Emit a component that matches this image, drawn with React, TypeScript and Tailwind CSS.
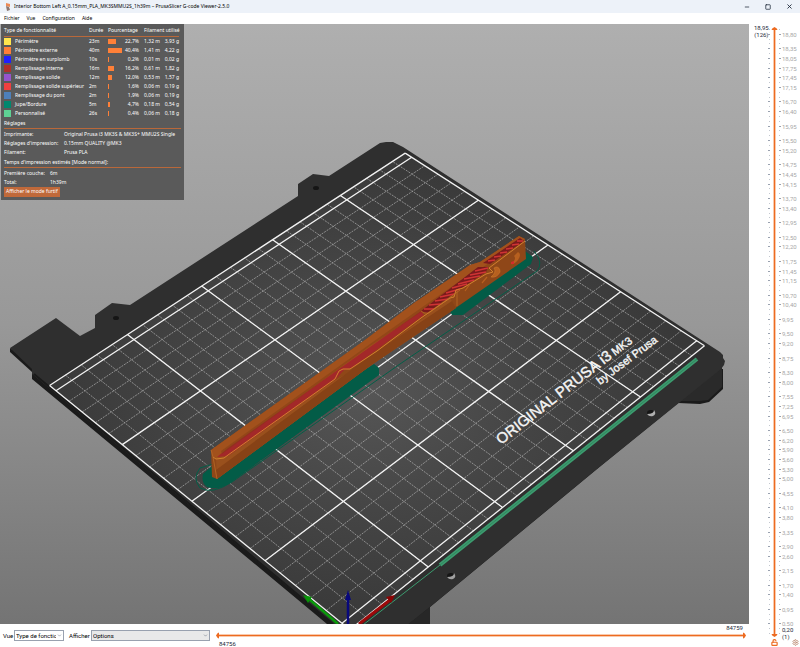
import { useState } from 'react';
import { ChevronDown, LockOpen, Minus, Settings, Square, X } from 'lucide-react';

type Point = [number, number];

const features = [
  { name: 'Périmètre', color: '#ffe64d', time: '23m', percent: 22.7, length: '1,32 m', weight: '3,93 g' },
  { name: 'Périmètre externe', color: '#ff7d38', time: '40m', percent: 40.4, length: '1,41 m', weight: '4,22 g' },
  { name: 'Périmètre en surplomb', color: '#1f1fff', time: '10s', percent: 0.2, length: '0,01 m', weight: '0,02 g' },
  { name: 'Remplissage interne', color: '#b03029', time: '16m', percent: 16.2, length: '0,61 m', weight: '1,82 g' },
  { name: 'Remplissage solide', color: '#9654cc', time: '12m', percent: 12.0, length: '0,53 m', weight: '1,57 g' },
  { name: 'Remplissage solide supérieur', color: '#f04040', time: '2m', percent: 1.6, length: '0,06 m', weight: '0,19 g' },
  { name: 'Remplissage du pont', color: '#4d80ba', time: '2m', percent: 1.9, length: '0,06 m', weight: '0,19 g' },
  { name: 'Jupe/Bordure', color: '#00876e', time: '5m', percent: 4.7, length: '0,18 m', weight: '0,54 g' },
  { name: 'Personnalisé', color: '#5ed194', time: '26s', percent: 0.4, length: '0,06 m', weight: '0,18 g' },
];

const settings = [
  ['Imprimante:', 'Original Prusa i3 MK3S & MK3S+ MMU2S Single'],
  ["Réglages d'impression:", '0.15mm QUALITY @MK3'],
  ['Filament:', 'Prusa PLA'],
];

const LAYER_COUNT = 126;
const labelledHeights = [
  18.8, 18.35, 18.05, 17.75, 17.45, 17.15, 16.7, 16.4, 15.95, 15.5, 15.2, 14.75, 14.45, 14.15, 13.7, 13.4, 12.95,
  12.5, 12.2, 11.75, 11.45, 11.15, 10.7, 10.4, 9.95, 9.5, 9.2, 8.75, 8.3, 8.0, 7.55, 7.25, 6.95, 6.5, 6.2, 5.9, 5.6,
  5.3, 5.0, 4.55, 4.1, 3.8, 3.35, 2.9, 2.6, 2.15, 1.7, 1.4, 0.95, 0.5,
];
const layers = Array.from({ length: LAYER_COUNT }, (_, i) => {
  const z = 18.95 - i * 0.15;
  return { z, top: (i / (LAYER_COUNT - 1)) * 100, labelled: labelledHeights.some((h) => Math.abs(h - z) < 0.01) };
});

// Bed millimetres (250 x 200) to view coordinates
const corners: Point[] = [
  [342, 623.3],
  [696.7, 340.7],
  [411.7, 157.3],
  [56, 390.7],
];

const project = (x: number, y: number): Point => {
  const [[x0, y0], [x1, y1], [x2, y2], [x3, y3]] = corners;
  const sx = x0 - x1 + x2 - x3;
  const sy = y0 - y1 + y2 - y3;
  const det = (x1 - x2) * (y3 - y2) - (y1 - y2) * (x3 - x2);
  const g = (sx * (y3 - y2) - sy * (x3 - x2)) / det;
  const h = ((x1 - x2) * sy - (y1 - y2) * sx) / det;
  const u = x / 250;
  const v = y / 200;
  const w = 1 + g * u + h * v;
  return [
    (x0 + (x1 - x0 + g * x1) * u + (x3 - x0 + h * x3) * v) / w,
    (y0 + (y1 - y0 + g * y1) * u + (y3 - y0 + h * y3) * v) / w,
  ];
};

const line = (x1: number, y1: number, x2: number, y2: number) => {
  const [a, b] = project(x1, y1);
  const [c, d] = project(x2, y2);
  return `M${a} ${b}L${c} ${d}`;
};

const range = (from: number, to: number, step: number) =>
  Array.from({ length: Math.floor((to - from) / step) + 1 }, (_, i) => from + i * step);

const fineGrid = [
  ...range(10, 240, 10).map((x) => line(x, -5, x, 205)),
  ...range(10, 190, 10).map((y) => line(0, y, 250, y)),
].join('');

const boldGrid = [
  ...range(0, 250, 50).map((x) => line(x, -5, x, 205)),
  ...[-5, 0, 50, 100, 150, 200, 205].map((y) => line(0, y, 250, y)),
].join('');

const Bed = () => (
  <g>
    {/* Underside */}
    <path
      d="M10 348V352L32 372V379L327 624H430V607L597 469L678 403L700 404L709 402L723 389V369L600 380L300 560Z"
      fill="#1b1b1b"
    />
    <path d="M660 401L722 366V387L708 400L700 401Z" fill="#2a2a2a" />
    {/* Steel sheet */}
    <path
      d="M10 348L56 318L80 336L95 328V315L112 303L130 305L298 196V184L313 174L329 176L380 143L386 142H393L403 147L720 352L723 355V358L725 361L724 365L721 369L597 469L430 607L409 624H332L32 374V369Z"
      fill="#2f2f2f"
    />
    <path d="M388 640L430 607V640Z" fill="#272727" />
    <path d="M34 374L333 624" stroke="#1b1b1b" strokeWidth="2" />
    <polygon
      points={[project(0, -5), project(250, -5), project(250, 205), project(0, 205)].map((p) => p.join(',')).join(' ')}
      fill="url(#sheet)"
    />
    <path d={fineGrid} stroke="#c4c4c4" strokeWidth="0.8" strokeDasharray="2 1" opacity="0.75" />
    <path d={boldGrid} stroke="#f2f2f2" strokeWidth="1.3" />
    <ellipse cx="316" cy="188" rx="3" ry="2" fill="#151515" />
    <ellipse cx="116" cy="318" rx="3" ry="2" fill="#151515" />
    <ellipse cx="451" cy="576" rx="4" ry="3" fill="#151515" />
    <path d="M447 577Q454 577 454 573Q457 577 453 579Q449 580 447 577Z" fill="#a0a0a0" />
    <ellipse cx="651" cy="413" rx="4" ry="3" fill="#151515" />
    <path d="M647 414Q654 414 654 410Q657 414 653 416Q649 417 647 414Z" fill="#b0b0b0" />
  </g>
);

const BedLabel = () => (
  <g fill="#f5f5f5" stroke="#f5f5f5" strokeWidth="0.4" className="font-['Liberation_Sans',Arial,sans-serif]">
    <g transform="translate(501 445) rotate(-38)">
      <text fontSize="15">ORIGINAL PRUSA i3</text>
    </g>
    <g transform="translate(615 356) rotate(-37)">
      <text fontSize="11">MK3</text>
    </g>
    <g transform="translate(600 385) rotate(-37)">
      <text fontSize="11">by Josef Prusa</text>
    </g>
  </g>
);

const Model = () => (
  <g>
    {/* Skirt and brim */}
    <path
      d="M213 464L200 468Q192 478 200 488Q212 495 232 482L400 364L537 271Q544 263 534 251"
      fill="none"
      stroke="#045f48"
      strokeWidth="1"
    />
    <path d="M212 466L203 474Q201 483 207 487Q218 491 230 483L379 375V368L374 364Z" fill="#035c47" />
    <path d="M450 311L452 315H463L531 264L533 257L525 251L470 290Z" fill="#035c47" />
    {/* Body */}
    <path
      d="M211 450L365 340L414 303L470 265L480 262L519 236L525 239L526 259L457 307L420 328L370 366L217 479L212 477Z"
      fill="#8f4718"
    />
    <path d="M211 450L365 340L414 303L470 265L480 262L519 236L525 239L480 269L370 349L217 459L213 456Z" fill="#a2511c" />
    <path d="M216 459L337 379L352 371L450 298L456 308L370 366L217 479Z" fill="#99501d" />
    <path d="M216 470L370 356L452 301L456 308L370 366L217 479Z" fill="#874216" />
    {/* Infill visible in the cut */}
    <path d="M217 457L228 448L377 342L421 311L424 315L352 368L344 370L337 378L228 456Z" fill="#a32829" />
    <path d="M221 451L377 339L421 308L480 267L486 271L421 312L370 346L222 454Z" fill="#7e3b15" opacity="0.45" />
    <path d="M421 311L478 267L488 267L486 272L460 289L427 313Z" fill="#7a1a1c" />
    <path
      d="M424 309L434 309M429 305L441 304M435 301L448 299M440 297L454 294M446 293L460 289M452 288L467 284M458 284L474 280M464 279L480 276M470 275L486 272M475 271L488 268"
      stroke="#cf3434"
      strokeWidth="1.6"
    />
    <path d="M483 263L520 238L524 241L490 264Z" fill="#7a1a1c" />
    <path
      d="M488 261L495 260M494 257L501 256M500 253L507 252M506 249L513 248M512 245L519 244M517 241L523 241"
      stroke="#cf3434"
      strokeWidth="1.5"
    />
    <path
      d="M213 457L216 459L224 458L228 455L335 379L339 371L343 369L350 369L377 351L421 318L450 298L454 297L456 290L463 288L486 274L493 272L489 268L525 241"
      fill="none"
      stroke="#d3812f"
      strokeWidth="1"
    />
    <path d="M421 311L424 313H429L460 290M457 290V306M211 450L213 457L217 479" fill="none" stroke="#bf7029" strokeWidth="0.7" />
    <path d="M496 267Q500 267 500 272Q497 278 491 277Q497 272 494 268Z" fill="#b7601f" stroke="#d3812f" strokeWidth="0.5" />
    <path d="M518 252Q522 254 518 260Q514 265 511 264Q517 259 514 256Z" fill="#b7601f" />
    <path d="M511 262L514 261V264L511 264Z" fill="#d42c2c" />
    <path d="M465 291L470 284M482 283L487 277" stroke="#b7601f" strokeWidth="1.2" />
  </g>
);

const Axes = () => (
  <g>
    <path d="M338 624L309 599" stroke="#0a9a0a" strokeWidth="2.5" />
    <path d="M303 595L312 597L308 603Z" fill="#079407" />
    <path d="M359 624L390 600" stroke="#9c0909" strokeWidth="3" />
    <path d="M395 595L386 597L391 603Z" fill="#8a0505" />
    <path d="M348 626V600" stroke="#08087c" strokeWidth="2.5" />
    <path d="M348 590L351 600H345Z" fill="#08087c" />
  </g>
);

const Viewport = () => (
  <svg viewBox="0 24 749 600" preserveAspectRatio="xMinYMin slice" className="block h-full w-full" role="img">
    <defs>
      <linearGradient id="backdrop" x1="0" y1="0" x2="0" y2="1">
        <stop offset="0" stopColor="#afafaf" />
        <stop offset="0.5" stopColor="#989898" />
        <stop offset="1" stopColor="#747474" />
      </linearGradient>
      <radialGradient id="sheet" cx="0.48" cy="0.5" r="0.5">
        <stop offset="0" stopColor="#565656" />
        <stop offset="0.5" stopColor="#454545" />
        <stop offset="1" stopColor="#383838" />
      </radialGradient>
    </defs>
    <rect y="24" width="749" height="600" fill="url(#backdrop)" />
    <Bed />
    <BedLabel />
    <path d="M697 359L440 565" stroke="#3c9b6f" strokeWidth="4" />
    <path d="M697 359L440 565" stroke="#2b7753" strokeWidth="0.6" />
    <path d="M440 565L363 625" stroke="#3c9b6f" strokeWidth="1" />
    <Model />
    <Axes />
  </svg>
);

const Legend = () => {
  const [stealth, setStealth] = useState(false);

  return (
    <section className="absolute top-0 left-px h-44 w-[183px] bg-[#5a5a5a] px-[3px] pt-[2px] text-[5px] leading-[9px] whitespace-nowrap text-white">
      <table className="w-[175px] table-fixed border-collapse">
        <colgroup>
          <col className="w-[85px]" />
          <col className="w-[19px]" />
          <col className="w-4" />
          <col className="w-[15px]" />
          <col className="w-[21px]" />
          <col className="w-[19px]" />
        </colgroup>
        <thead>
          <tr className="h-[10px] text-left">
            <th className="p-0 font-normal">Type de fonctionnalité</th>
            <th className="p-0 font-normal">Durée</th>
            <th colSpan={2} className="p-0 font-normal">Pourcentage</th>
            <th colSpan={2} className="p-0 pl-[5px] font-normal">Filament utilisé</th>
          </tr>
        </thead>
        <tbody className="border-t border-[#b9683a]">
          {features.map((feature) => (
            <tr key={feature.name} className="h-[9px]">
              <td className="p-0">
                <div className="flex items-center gap-1">
                  <svg viewBox="0 0 7 7" className="size-[7px]">
                    <rect width="7" height="7" fill={feature.color} />
                  </svg>
                  <span>{feature.name}</span>
                </div>
              </td>
              <td className="p-0">{feature.time}</td>
              <td className="p-0">
                <div
                  className="h-[5px] min-w-px bg-[#ff8038]"
                  style={{ width: `${Math.max(4, (feature.percent / 40.4) * 88)}%` }}
                />
              </td>
              <td className="p-0 text-right">{feature.percent.toFixed(1).replace('.', ',')}%</td>
              <td className="p-0 text-right">{feature.length}</td>
              <td className="p-0 text-right">{feature.weight}</td>
            </tr>
          ))}
        </tbody>
      </table>
      <h2 className="mt-px border-b border-[#b9683a]">Réglages</h2>
      <dl className="grid grid-cols-[60px_1fr] pt-px">
        {settings.map(([label, value]) => (
          <div key={label} className="contents">
            <dt>{label}</dt>
            <dd>{value}</dd>
          </div>
        ))}
      </dl>
      <h2 className="mt-px border-b border-[#b9683a]">Temps d'impression estimés [Mode normal]:</h2>
      <dl className="grid grid-cols-[46px_1fr] pt-px">
        <dt>Première couche:</dt>
        <dd>6m</dd>
        <dt>Total:</dt>
        <dd>1h39m</dd>
      </dl>
      <button type="button" onClick={() => setStealth(!stealth)} className="block h-[10px] bg-[#c0693a] px-[2px]">
        {stealth ? 'Afficher le mode normal' : 'Afficher le mode furtif'}
      </button>
    </section>
  );
};

const LayerSlider = () => (
  <aside className="flex w-[51px] shrink-0 flex-col bg-white font-['Roboto',sans-serif] text-[6px] leading-[7px]">
    <div className="relative mt-[5px] mb-[14px] flex-1">
      <div className="absolute -top-[5px] left-[5px] text-center text-gray-800">
        18,95
        <br />
        (126)
      </div>
      {layers.map(({ z, top, labelled }) => (
        <div key={z} className="absolute left-[19px] h-0 w-[30px]" style={{ top: `${top}%` }}>
          <div className={`absolute left-0 h-px bg-gray-400 ${labelled ? 'w-[2px]' : 'ml-px w-px opacity-60'}`} />
          <div className={`absolute left-[11px] h-px bg-gray-400 ${labelled ? 'w-[2px]' : 'w-px opacity-60'}`} />
          {labelled && (
            <span className="absolute -top-[3px] left-[14px] text-[#a8a8a8]">{z.toFixed(2).replace('.', ',')}</span>
          )}
        </div>
      ))}
      <div className="absolute top-0 -bottom-[3px] left-[24px] w-[3px] border-x border-[#f9c9ac] bg-[#ed6b21]" />
      <svg viewBox="0 0 6 3" className="absolute -top-[2px] left-[22px] h-[3px] w-[7px]">
        <path d="M0 3Q0 1.500 3 0Q6 1.500 6 3Z" fill="#ed6b21" />
      </svg>
      <svg viewBox="0 0 6 3" className="absolute -bottom-[4px] left-[22px] h-[3px] w-[7px]">
        <path d="M0 0Q0 1.500 3 3Q6 1.500 6 0Z" fill="#ed6b21" />
      </svg>
      <div className="absolute -bottom-[7px] left-[33px] bg-white text-gray-800">
        0,20
        <br />
        (1)
      </div>
      <input
        type="range"
        aria-label="Couches"
        min={1}
        max={LAYER_COUNT}
        defaultValue={LAYER_COUNT}
        className="absolute top-0 left-[22px] h-full w-[7px] opacity-0 [writing-mode:vertical-lr]"
      />
      <button type="button" aria-label="Verrouiller" className="absolute -bottom-[13px] left-[22px] text-[#ed6b21]">
        <LockOpen size={7} strokeWidth={4} />
      </button>
      <button type="button" aria-label="Paramètres" className="absolute -bottom-[13px] left-[43px] text-[#bf8f78]">
        <Settings size={7} strokeWidth={3} />
      </button>
    </div>
  </aside>
);

const MoveSlider = () => (
  <div className="relative mr-[2px] ml-[5px] h-full flex-1 leading-[7px] text-gray-800">
    <div className="absolute top-[10px] right-[3px] left-[3px] h-[3px] border-y border-[#f9c9ac] bg-[#ed6b21]" />
    <svg viewBox="0 0 3 6" className="absolute top-2 left-px h-[7px] w-[3px]">
      <path d="M3 0Q1.500 0 0 3Q1.500 6 3 6Z" fill="#ed6b21" />
    </svg>
    <svg viewBox="0 0 3 6" className="absolute top-2 right-px h-[7px] w-[3px]">
      <path d="M0 0Q1.500 0 3 3Q1.500 6 0 6Z" fill="#ed6b21" />
    </svg>
    <span className="absolute top-0 right-1">84759</span>
    <span className="absolute bottom-0 left-1">84756</span>
    <input
      type="range"
      aria-label="Mouvements"
      min={84756}
      max={84759}
      defaultValue={84759}
      className="absolute top-2 left-0 h-[7px] w-full opacity-0"
    />
  </div>
);

export default function App() {
  return (
    <div className="flex h-screen flex-col overflow-hidden bg-white font-['Noto_Sans',sans-serif] text-[5px] text-black">
      {/* Title bar */}
      <header className="flex h-[13px] shrink-0 items-center bg-[#edf2f9] px-[5px]">
        <svg viewBox="0 0 6 8" className="mr-[3px] h-2 w-[6px]">
          <path d="M1 0L5 1L5 4L1 3Z" fill="#ed8a55" />
          <path d="M1 3L4 4L5 7L2 8Z" fill="#8d7771" />
        </svg>
        <h1 className="flex-1 whitespace-nowrap">
          Interior Bottom Left A_0.15mm_PLA_MK3SMMU2S_1h39m – PrusaSlicer G-code Viewer-2.5.0
        </h1>
        <div className="flex gap-[15px] pr-[2px] text-gray-800">
          <button type="button" aria-label="Réduire">
            <Minus size={6} strokeWidth={3} />
          </button>
          <button type="button" aria-label="Agrandir">
            <Square size={6} strokeWidth={3} />
          </button>
          <button type="button" aria-label="Fermer">
            <X size={7} strokeWidth={3} />
          </button>
        </div>
      </header>

      <nav className="flex h-[11px] shrink-0 items-center gap-[7px] px-1">
        <button type="button">Fichier</button>
        <button type="button">Vue</button>
        <button type="button">Configuration</button>
        <button type="button">Aide</button>
      </nav>

      <div className="flex min-h-0 flex-1">
        <main className="flex min-w-0 flex-1 flex-col">
          <div className="relative min-h-0 flex-1 overflow-hidden">
            <Viewport />
            <Legend />
          </div>

          {/* Bottom toolbar */}
          <footer className="flex h-[23px] shrink-0 items-center pl-[3px] font-['Roboto',sans-serif] text-[6px]">
            <label htmlFor="view-type" className="w-[11px]">Vue</label>
            <div className="relative flex items-center">
              <select
                id="view-type"
                className="h-[11px] w-[50px] appearance-none border border-gray-400 bg-white pr-[7px] pl-px"
              >
                <option>Type de fonctionnalité</option>
              </select>
              <ChevronDown size={5} className="pointer-events-none absolute right-[2px] text-gray-600" />
            </div>
            <label htmlFor="show" className="ml-[5px] w-[22px]">Afficher</label>
            <div className="relative flex items-center">
              <select id="show" className="h-[11px] w-[119px] appearance-none border border-gray-400 bg-[#e9e9e9] pl-px">
                <option>Options</option>
              </select>
              <ChevronDown size={5} className="pointer-events-none absolute right-[2px] text-gray-600" />
            </div>
            <MoveSlider />
          </footer>
        </main>
        <LayerSlider />
      </div>
    </div>
  );
}
